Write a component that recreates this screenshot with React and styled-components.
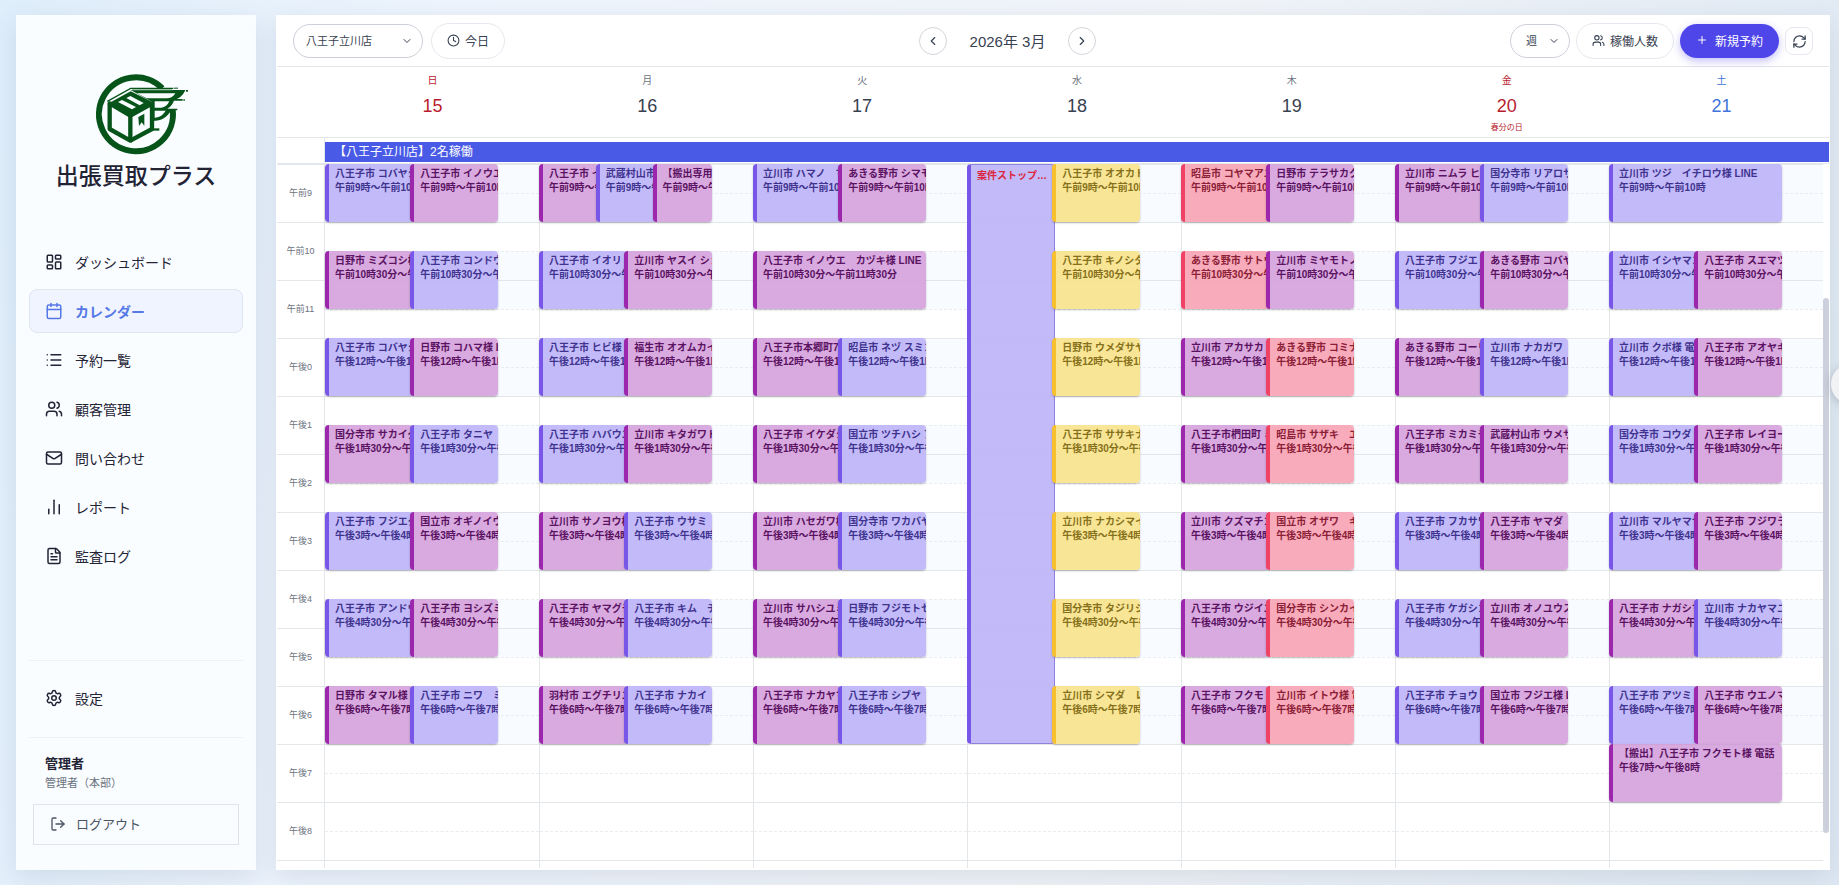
import React from "react";
import styled, { createGlobalStyle, css } from "styled-components";
import {
  Calendar,
  ChartNoAxesColumn,
  ChevronDown,
  ChevronLeft,
  ChevronRight,
  Clock,
  FileText,
  LayoutDashboard,
  List,
  LogOut,
  Mail,
  Plus,
  RefreshCw,
  Settings,
  Users,
} from "lucide-react";

const GlobalStyle = createGlobalStyle`
  *, *::before, *::after { box-sizing: border-box; }
  body {
    margin: 0;
    overflow: hidden;
    color: #232336;
    font-family: "Liberation Sans", "Noto Sans CJK JP", sans-serif;
    font-size: 14px;
  }
  button, select { font-family: inherit; color: inherit; margin: 0; cursor: pointer; }
  h1, h2, p, ul { margin: 0; padding: 0; }
`;

const line = "#e3e7ea";

/* ---------- page frame ---------- */

const Page = styled.div`
  display: flex;
  gap: 20px;
  height: 100vh;
  padding: 15px 9px 15px 16px;
  background: linear-gradient(100deg, #dfeefb 0%, #edf4fd 22%, #f1f4f8 60%, #dfe9f4 100%);
`;

const Sidebar = styled.aside`
  display: flex;
  flex-direction: column;
  flex: 0 0 240px;
  padding: 58px 13px 25px;
  background: #fafdff;
  box-shadow: 0 8px 24px rgba(70, 95, 120, 0.14);
`;

const Panel = styled.main`
  display: flex;
  flex-direction: column;
  flex: 1;
  min-width: 0;
  padding: 1px 1px 2px;
  background: #fff;
  box-shadow: 0 8px 24px rgba(70, 95, 120, 0.14);
`;

/* ---------- sidebar ---------- */

const Brand = styled.div`
  display: flex;
  flex-direction: column;
  align-items: center;
  gap: 4px;
  margin-bottom: 48px;
`;

const BrandName = styled.h1`
  font-size: 23px;
  line-height: 32px;
  font-weight: 500;
  white-space: nowrap;
`;

const NavList = styled.nav`
  display: flex;
  flex-direction: column;
  gap: 5px;
`;

const NavLink = styled.a`
  display: flex;
  align-items: center;
  gap: 12px;
  height: 44px;
  padding: 0 15px;
  border: 1px solid transparent;
  border-radius: 8px;
  color: #232336;
  font-size: 14px;
  text-decoration: none;
  ${(p) =>
    p.$active &&
    css`
      background: #f0f4fe;
      border-color: #e0e5f2;
      color: #5578e6;
      font-weight: 700;
    `}
`;

const SidebarFooter = styled.div`
  margin-top: auto;
`;

const FooterSection = styled.div`
  padding: 15px 0 17px;
  border-top: 1px solid #eff2f5;
`;

const Account = styled.div`
  padding: 16px 4px 0;
  border-top: 1px solid #eff2f5;
`;

const AccountName = styled.p`
  padding-left: 12px;
  font-size: 13px;
  line-height: 20px;
  font-weight: 700;
`;

const AccountRole = styled.p`
  padding-left: 12px;
  margin-bottom: 12px;
  color: #6b7280;
  font-size: 11px;
  line-height: 18px;
`;

const LogoutButton = styled.button`
  display: flex;
  align-items: center;
  gap: 10px;
  width: 100%;
  height: 41px;
  padding: 0 16px 2px;
  border: 1px solid #dfe3ea;
  background: transparent;
  color: #4b5563;
  font-size: 13px;
`;

/* ---------- toolbar ---------- */

const Toolbar = styled.header`
  display: flex;
  align-items: center;
  justify-content: space-between;
  height: 51px;
  padding: 0 16px;
  border-bottom: 1px solid ${line};
  color: #374151;
`;

const ToolGroup = styled.div`
  display: flex;
  align-items: center;
  gap: ${(p) => p.$gap}px;
`;

const SelectWrap = styled.label`
  position: relative;
  display: flex;
  align-items: center;

  svg {
    position: absolute;
    right: 10px;
    pointer-events: none;
  }
`;

const PillSelect = styled.select`
  width: ${(p) => p.$width}px;
  height: 34px;
  padding: 0 24px 0 ${(p) => p.$inset}px;
  border: 1px solid #ccd0d8;
  border-radius: 17px;
  appearance: none;
  background: #fff;
  font-size: 11px;
`;

const PillButton = styled.button`
  display: flex;
  align-items: center;
  gap: 5px;
  height: 36px;
  padding: 0 15px 2px;
  border: 1px solid #e5e8ee;
  border-radius: 18px;
  background: #fff;
  font-size: 12px;
`;

const PrimaryButton = styled(PillButton)`
  gap: 7px;
  height: 34px;
  padding: 0 16px 2px;
  border: 0;
  background: #4f46e9;
  box-shadow: 0 3px 8px rgba(79, 70, 233, 0.35);
  color: #fff;
`;

const IconButton = styled.button`
  display: flex;
  align-items: center;
  justify-content: center;
  width: 28px;
  height: 28px;
  padding: 0;
  border: 1px solid ${(p) => (p.$round ? "#d3d6dc" : "#e5e8ee")};
  border-radius: ${(p) => (p.$round ? "14px" : "8px")};
  background: #fff;
`;

const MonthTitle = styled.h2`
  padding-bottom: 2px;
  font-size: 15px;
  font-weight: 400;
`;

/* ---------- calendar ---------- */

const AXIS = "48px";
const HALF_HOUR = 29;
const HOURS = 13;

const DayHeaders = styled.div`
  display: grid;
  grid-template-columns: repeat(7, 1fr);
  height: 71px;
  padding-left: ${AXIS};
  border-bottom: 1px solid ${line};
`;

const tones = {
  plain: { dow: "#6b7280", date: "#374151" },
  red: { dow: "#b91c2e", date: "#b91c2e" },
  blue: { dow: "#4174dc", date: "#4174dc" },
};

const DayHeader = styled.div`
  display: flex;
  flex-direction: column;
  align-items: center;
  padding-top: 5px;
  color: ${(p) => tones[p.$tone].date};
`;

const Weekday = styled.span`
  color: ${(p) => tones[p.$tone].dow};
  font-size: 10px;
  line-height: 18px;
`;

const DateNumber = styled.span`
  margin: 4px 0;
  font-size: 18px;
  line-height: 24px;
`;

const Holiday = styled.span`
  font-size: 8px;
  line-height: 12px;
`;

const AllDayRow = styled.div`
  display: grid;
  grid-template-columns: ${AXIS} 1fr;
  border-bottom: 1px solid ${line};
`;

const AllDayAxis = styled.div`
  border-right: 1px solid ${line};
`;

const AllDayBar = styled.div`
  height: 20px;
  margin: 4px 0 1px;
  padding-left: 9px;
  background: #495be6;
  color: #fff;
  font-size: 12px;
  line-height: 20px;
`;

const Body = styled.div`
  display: flex;
  flex: 1;
  min-height: 0;
  overflow: hidden;
`;

const TimeGrid = styled.div`
  display: grid;
  grid-template-columns: ${AXIS} repeat(7, 1fr);
  flex: 1;
  align-self: flex-start;
`;

const Axis = styled.div`
  border-right: 1px solid ${line};
`;

const AxisLabel = styled.div`
  height: ${HALF_HOUR * 2}px;
  border-top: 1px solid ${line};
  color: #6b7280;
  font-size: 9px;
  line-height: ${HALF_HOUR * 2 - 2}px;
  text-align: center;
`;

const Day = styled.div`
  display: grid;
  grid-template-columns: minmax(0, 1fr);

  > * {
    grid-area: 1 / 1;
  }
`;

const SlotLayer = styled.div`
  border-left: ${(p) => (p.$first ? "0" : `1px solid ${line}`)};
`;

const Slot = styled.div`
  height: ${HALF_HOUR}px;
  border-top: 1px ${(p) => (p.$half ? "dashed #e9edf0" : `solid ${line}`)};
  background: ${(p) => (p.$open ? "#f8fbff" : "#fff")};
`;

const EventLayer = styled.div`
  display: grid;
  grid-template-columns: repeat(6, minmax(0, 1fr));
  grid-template-rows: repeat(${HOURS * 2}, ${HALF_HOUR}px);
  margin-right: 19%;
  padding-left: 3px;
`;

const palette = {
  v: { bg: "rgba(188,180,248,.9)", edge: "#7857e8", text: "#40338f" },
  p: { bg: "rgba(212,161,219,.9)", edge: "#9c27ac", text: "#5b1262" },
  y: { bg: "rgba(247,227,139,.9)", edge: "#f6c02f", text: "#86701a" },
  r: { bg: "rgba(247,162,180,.9)", edge: "#ef4264", text: "#8c2036" },
};

const Booking = styled.article`
  position: relative;
  grid-row: ${(p) => p.$row} / span ${(p) => p.$span};
  grid-column: ${(p) => p.$col} / span ${(p) => p.$cols};
  margin-left: -3px;
  padding: 3px 0 0 6px;
  overflow: hidden;
  border-left: 4px solid ${(p) => palette[p.$color].edge};
  border-radius: 4px;
  background: ${(p) => palette[p.$color].bg};
  box-shadow: 0 1px 2px rgba(0, 0, 0, 0.25);
  color: ${(p) => palette[p.$color].text};
  font-size: 10px;
  line-height: 14px;
  font-weight: 700;
  white-space: nowrap;
  ${(p) =>
    p.$stop &&
    css`
      padding-top: 4px;
      border: 1px solid #8f82dc;
      border-left: 4px solid ${palette.v.edge};
      box-shadow: none;
      color: #dc2640;
    `}
`;

const ScrollTrack = styled.div`
  display: grid;
  grid-template-rows: 19fr 76fr 5fr;
  flex: 0 0 6px;
`;

const ScrollThumb = styled.div`
  grid-row: 2;
  border-radius: 3px;
  background: #cbd0dc;
`;

const EdgeHandle = styled.button`
  position: fixed;
  top: calc(43vh + 3px);
  right: -32px;
  width: 40px;
  height: 40px;
  margin-top: -20px;
  padding: 0;
  border: 0;
  border-radius: 50%;
  background: #f1f2f4;
  box-shadow: 0 2px 10px rgba(40, 50, 70, 0.25);
`;

/* ---------- data ---------- */

const navItems = [
  [LayoutDashboard, "ダッシュボード"],
  [Calendar, "カレンダー"],
  [List, "予約一覧"],
  [Users, "顧客管理"],
  [Mail, "問い合わせ"],
  [ChartNoAxesColumn, "レポート"],
  [FileText, "監査ログ"],
];

const axisLabels = [
  "午前9", "午前10", "午前11", "午後0", "午後1", "午後2", "午後3",
  "午後4", "午後5", "午後6", "午後7", "午後8", "午後9",
];

/* One entry per visit window: first half-hour row and the time shown. */
const windows = [
  [1, "午前9時～午前10時"],
  [4, "午前10時30分～午前11時30分"],
  [7, "午後12時～午後1時"],
  [10, "午後1時30分～午後2時30分"],
  [13, "午後3時～午後4時"],
  [16, "午後4時30分～午後5時30分"],
  [19, "午後6時～午後7時"],
  [21, "午後7時～午後8時"],
];

const days = [
  {
    dow: "日", date: 15, tone: "red",
    visits: [
      ["v八王子市 コバヤシ", "p八王子市 イノウエ"],
      ["p日野市 ミズコシ様", "v八王子市 コンドウ"],
      ["v八王子市 コバヤシ", "p日野市 コハマ様 LINE"],
      ["p国分寺市 サカイダ", "v八王子市 タニヤ"],
      ["v八王子市 フジエダ", "p国立市 オギノイウ"],
      ["v八王子市 アンドウ", "p八王子市 ヨシズミ"],
      ["p日野市 タマル様", "v八王子市 ニワ　ミ"],
    ],
  },
  {
    dow: "月", date: 16, tone: "plain",
    visits: [
      ["p八王子市 イ", "v武蔵村山市", "p【搬出専用】"],
      ["v八王子市 イオリ", "p立川市 ヤスイ ショ"],
      ["v八王子市 ヒビ様", "p福生市 オオムカイ"],
      ["v八王子市 ハバウエ", "p立川市 キタガワト"],
      ["p立川市 サノヨウ様", "v八王子市 ウサミ"],
      ["p八王子市 ヤマグチ", "v八王子市 キム　チ"],
      ["p羽村市 エグチリエ", "v八王子市 ナカイ"],
    ],
  },
  {
    dow: "火", date: 17, tone: "plain",
    visits: [
      ["v立川市 ハマノ　マ", "pあきる野市 シマモ"],
      ["p八王子市 イノウエ　カヅキ様 LINE"],
      ["p八王子市本郷町7", "v昭島市 ネヅ スミコ"],
      ["p八王子市 イケダシ", "v国立市 ツチハシ ア"],
      ["p立川市 ハセガワ様", "v国分寺市 ワカバヤ"],
      ["p立川市 サハシユミ", "v日野市 フジモトセ"],
      ["p八王子市 ナカヤマ", "v八王子市 シブヤ"],
    ],
  },
  {
    dow: "水", date: 18, tone: "plain", stop: "案件ストップ…",
    visits: [
      ["y八王子市 オオカト"],
      ["y八王子市 キノシタ"],
      ["y日野市 ウメダサヤ"],
      ["y八王子市 ササキナ"],
      ["y立川市 ナカシマイ"],
      ["y国分寺市 タジリシ"],
      ["y立川市 シマダ　レ"],
    ],
  },
  {
    dow: "木", date: 19, tone: "plain",
    visits: [
      ["r昭島市 コヤマアユ", "p日野市 テラサカク"],
      ["rあきる野市 サトウ", "p立川市 ミヤモトノ"],
      ["p立川市 アカサカ", "rあきる野市 コミナ"],
      ["p八王子市椚田町 ミ", "r昭島市 サザキ　エ"],
      ["p立川市 クズマチコ", "r国立市 オザワ　キ"],
      ["p八王子市 ウジイエ", "r国分寺市 シンカイ"],
      ["p八王子市 フクモト", "r立川市 イトウ様 電話"],
    ],
  },
  {
    dow: "金", date: 20, tone: "red", holiday: "春分の日",
    visits: [
      ["p立川市 ニムラ ヒ", "v国分寺市 リアロサ"],
      ["v八王子市 フジエ", "pあきる野市 コバヤ"],
      ["pあきる野市 コーリ", "v立川市 ナカガワ"],
      ["p八王子市 ミカミチ", "p武蔵村山市 ウメサ"],
      ["v八王子市 フカサワ", "p八王子市 ヤマダ"],
      ["v八王子市 ケガシコ", "p立川市 オノユウス"],
      ["v八王子市 チョウ", "p国立市 フジエ様 LINE"],
    ],
  },
  {
    dow: "土", date: 21, tone: "blue",
    visits: [
      ["v立川市 ツジ　イチロウ様 LINE"],
      ["v立川市 イシヤマコ", "p八王子市 スエマツ"],
      ["v立川市 クボ様 電話", "p八王子市 アオヤキ"],
      ["v国分寺市 コウダ", "p八王子市 レイヨー"],
      ["v立川市 マルヤマサ", "p八王子市 フジワラ"],
      ["p八王子市 ナガシマ", "v立川市 ナカヤマユ"],
      ["v八王子市 アツミ", "p八王子市 ウエノマ"],
      ["p【搬出】八王子市 フクモト様 電話"],
    ],
  },
];

const slots = Array.from({ length: HOURS * 2 }, (_, i) => ({
  half: i % 2 === 1,
  open: i < 20 && i % 3 !== 2,
}));

/* ---------- pieces ---------- */

/* Winged parcel inside an open ring. */
function Emblem() {
  return (
    <svg width="106" height="83" viewBox="249 218 318 249" aria-hidden="true">
      <g fill="none" stroke="#07541a">
        <path d="M487 264 A111 111 0 1 0 518 328" strokeWidth="18" />
        <path d="M329 309 L391 346 V421 L329 386 Z" strokeWidth="13" strokeLinejoin="round" />
        <path d="M391 346 L456 310 V386 L391 421" strokeWidth="13" strokeLinejoin="round" />
        <path d="M322 303 L392 264 H520" strokeWidth="4" />
      </g>
      <g fill="#07541a">
        <path d="M322 311 L392 273 L464 309 L391 350 Z" />
        <path d="M392 269 H556 C550 284 540 292 530 296 H548 V301 H522 C516 314 510 321 502 325 H532 V330 H514 C500 352 486 362 458 362 V306 Z" />
        <path d="M415 350 L433 340 V376 L425 366 L417 377 Z" />
        <path d="M456 384 H478 V391 H456 Z" />
        <rect x="522" y="262" width="12" height="3" />
        <rect x="558" y="269" width="6" height="5" />
        <rect x="550" y="297" width="5" height="4" />
      </g>
      <g fill="#fafdff">
        <path d="M354 305 L366 299 L408 320 L396 327 Z" />
        <path d="M379 293 L391 287 L431 308 L419 315 Z" />
        <path d="M410 279 H526 C520 289 512 294 500 294 H440 Z" />
        <path d="M464 303 H508 C502 315 495 321 484 322 H464 Z" />
        <path d="M464 331 H497 C489 344 480 350 464 352 Z" />
      </g>
      <path d="M396 268 H516" stroke="#9cbfa4" strokeWidth="4" />
    </svg>
  );
}

function SidebarNav() {
  return (
    <Sidebar>
      <Brand>
        <Emblem />
        <BrandName>出張買取プラス</BrandName>
      </Brand>
      <NavList>
        {navItems.map(([Icon, label]) => (
          <NavLink key={label} href="#" $active={label === "カレンダー"}>
            <Icon size={18} />
            {label}
          </NavLink>
        ))}
      </NavList>
      <SidebarFooter>
        <FooterSection>
          <NavLink href="#">
            <Settings size={18} />
            設定
          </NavLink>
        </FooterSection>
        <Account>
          <AccountName>管理者</AccountName>
          <AccountRole>管理者（本部）</AccountRole>
          <LogoutButton type="button">
            <LogOut size={16} />
            ログアウト
          </LogoutButton>
        </Account>
      </SidebarFooter>
    </Sidebar>
  );
}

function CalendarToolbar() {
  return (
    <Toolbar>
      <ToolGroup $gap={8}>
        <SelectWrap>
          <PillSelect $width={130} $inset={12} aria-label="店舗">
            <option>八王子立川店</option>
          </PillSelect>
          <ChevronDown size={12} />
        </SelectWrap>
        <PillButton type="button">
          <Clock size={13} />
          今日
        </PillButton>
      </ToolGroup>
      <ToolGroup $gap={23}>
        <IconButton type="button" $round aria-label="前の週">
          <ChevronLeft size={14} />
        </IconButton>
        <MonthTitle>2026年 3月</MonthTitle>
        <IconButton type="button" $round aria-label="次の週">
          <ChevronRight size={14} />
        </IconButton>
      </ToolGroup>
      <ToolGroup $gap={6}>
        <SelectWrap>
          <PillSelect $width={60} $inset={15} aria-label="表示">
            <option>週</option>
          </PillSelect>
          <ChevronDown size={12} />
        </SelectWrap>
        <PillButton type="button">
          <Users size={13} />
          稼働人数
        </PillButton>
        <PrimaryButton type="button">
          <Plus size={12} />
          新規予約
        </PrimaryButton>
        <IconButton type="button" aria-label="更新">
          <RefreshCw size={15} />
        </IconButton>
      </ToolGroup>
    </Toolbar>
  );
}

function DayColumn({ day, first }) {
  return (
    <Day>
      <SlotLayer $first={first}>
        {slots.map((s, i) => (
          <Slot key={i} $half={s.half} $open={s.open} />
        ))}
      </SlotLayer>
      <EventLayer>
        {day.stop && (
          <Booking $stop $color="v" $row={1} $span={20} $col={1} $cols={3}>
            {day.stop}
          </Booking>
        )}
        {day.visits.map((group, w) => {
          const cols = day.stop ? 3 : 6 / group.length;
          return group.map((entry, i) => (
            <Booking
              key={`${w}-${i}`}
              $color={entry[0]}
              $row={windows[w][0]}
              $span={2}
              $col={(day.stop ? 4 : 1) + i * cols}
              $cols={cols}
            >
              <div>{entry.slice(1)}</div>
              <div>{windows[w][1]}</div>
            </Booking>
          ));
        })}
      </EventLayer>
    </Day>
  );
}

export default function App() {
  return (
    <>
      <GlobalStyle />
      <Page lang="ja">
        <SidebarNav />
        <Panel>
          <CalendarToolbar />
          <DayHeaders>
            {days.map((d) => (
              <DayHeader key={d.date} $tone={d.tone}>
                <Weekday $tone={d.tone}>{d.dow}</Weekday>
                <DateNumber>{d.date}</DateNumber>
                {d.holiday && <Holiday>{d.holiday}</Holiday>}
              </DayHeader>
            ))}
          </DayHeaders>
          <AllDayRow>
            <AllDayAxis />
            <AllDayBar>【八王子立川店】2名稼働</AllDayBar>
          </AllDayRow>
          <Body>
            <TimeGrid>
              <Axis>
                {axisLabels.map((label) => (
                  <AxisLabel key={label}>{label}</AxisLabel>
                ))}
              </Axis>
              {days.map((d, i) => (
                <DayColumn key={d.date} day={d} first={i === 0} />
              ))}
            </TimeGrid>
            <ScrollTrack>
              <ScrollThumb />
            </ScrollTrack>
          </Body>
        </Panel>
        <EdgeHandle type="button" aria-label="パネルを開く" />
      </Page>
    </>
  );
}
